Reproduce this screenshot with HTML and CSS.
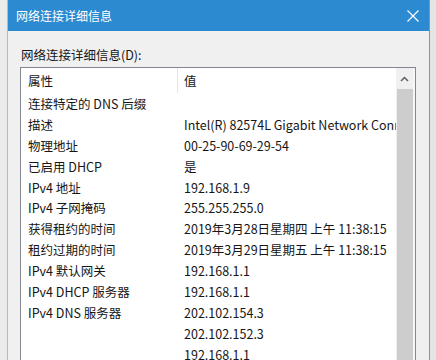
FILE: index.html
```html
<!DOCTYPE html>
<html lang="zh-CN">
<head>
  <meta charset="UTF-8" />
  <title>网络连接详细信息</title>
  <link rel="stylesheet" href="styles.css">
</head>
<body>
  <div class="screen">
    <div class="dialog">
      <div class="titlebar">
        <span class="title">网络连接详细信息</span>
        <svg class="close" width="12" height="12" viewBox="0 0 12 12">
          <path d="M0.5 0.5 L11.5 11.5 M11.5 0.5 L0.5 11.5" stroke="#fff" stroke-width="1.2" fill="none"/>
        </svg>
      </div>
      <div class="content">
        <div class="label">网络连接详细信息(D):</div>
        <div class="listbox">
          <div class="list">
            <div class="row head">
              <div class="prop">属性</div>
              <div class="val">值</div>
            </div>
            <div class="row"><div class="prop">连接特定的 DNS 后缀</div><div class="val"></div></div>
            <div class="row"><div class="prop">描述</div><div class="val">Intel(R) 82574L Gigabit Network Connection</div></div>
            <div class="row"><div class="prop">物理地址</div><div class="val">00-25-90-69-29-54</div></div>
            <div class="row"><div class="prop">已启用 DHCP</div><div class="val">是</div></div>
            <div class="row"><div class="prop">IPv4 地址</div><div class="val">192.168.1.9</div></div>
            <div class="row"><div class="prop">IPv4 子网掩码</div><div class="val">255.255.255.0</div></div>
            <div class="row"><div class="prop">获得租约的时间</div><div class="val">2019年3月28日星期四 上午 11:38:15</div></div>
            <div class="row"><div class="prop">租约过期的时间</div><div class="val">2019年3月29日星期五 上午 11:38:15</div></div>
            <div class="row"><div class="prop">IPv4 默认网关</div><div class="val">192.168.1.1</div></div>
            <div class="row"><div class="prop">IPv4 DHCP 服务器</div><div class="val">192.168.1.1</div></div>
            <div class="row"><div class="prop">IPv4 DNS 服务器</div><div class="val">202.102.154.3</div></div>
            <div class="row"><div class="prop"></div><div class="val">202.102.152.3</div></div>
            <div class="row"><div class="prop"></div><div class="val">192.168.1.1</div></div>
          </div>
          <div class="scrollbar">
            <div class="arrow">
              <svg width="9" height="6" viewBox="0 0 9 6">
                <path d="M1 5 L4.5 1.5 L8 5" stroke="#606060" stroke-width="1.5" fill="none"/>
              </svg>
            </div>
            <div class="thumb"></div>
          </div>
        </div>
      </div>
    </div>
    <div class="edge"></div>
  </div>
</body>
</html>
```

FILE: styles.css
```css
html, body {
  margin: 0;
  height: 100%;
  overflow: hidden;
}
body {
  font-family: "Noto Sans CJK SC", "Noto Sans", sans-serif;
  font-size: 12.5px;
  color: #161616;
  background: #ebebeb;
}
.screen {
  display: flex;
  height: 360px;
  padding-left: 7px;
}
.dialog {
  width: 421px;
  border-left: 1px solid #b9b9b9;
  display: flex;
  flex-direction: column;
  background: #f0f0f0;
}
.edge {
  flex: 1;
  border-left: 1px solid #6f9cc4;
  background: #e4e4e4;
}
.titlebar {
  height: 31px;
  background: #2c8ad0;
  color: #fff;
  display: flex;
  align-items: center;
  justify-content: space-between;
  padding: 0 10px 0 8px;
  flex-shrink: 0;
}
.title {
  font-size: 12px;
}
.content {
  padding: 14px 0 0 12px;
  flex: 1;
  display: flex;
  flex-direction: column;
}
.label {
  height: 22px;
  line-height: 19px;
  padding-left: 1px;
}
.listbox {
  width: 394px;
  flex: 1;
  border: 1px solid #828790;
  border-bottom: 0;
  background: #fff;
  display: flex;
}
.list {
  flex: 1;
  overflow: hidden;
}
.row {
  display: flex;
  height: 20.9px;
  line-height: 21px;
  white-space: nowrap;
}
.row.head {
  height: 25px;
  line-height: 25px;
}
.prop {
  width: 149px;
  padding-left: 7px;
  flex-shrink: 0;
}
.head .prop {
  border-right: 1px solid #e5e5e5;
}
.val {
  padding-left: 7px;
  overflow: hidden;
}
.head .val {
  padding-left: 6px;
}
.scrollbar {
  width: 17px;
  display: flex;
  flex-direction: column;
  background: #f0f0f0;
  border-right: 2px solid #f7f7f7;
}
.arrow {
  height: 21px;
  display: flex;
  align-items: center;
  justify-content: center;
}
.thumb {
  flex: 1;
  background: #cdcdcd;
  margin: 0 0 0 1px;
}
```
